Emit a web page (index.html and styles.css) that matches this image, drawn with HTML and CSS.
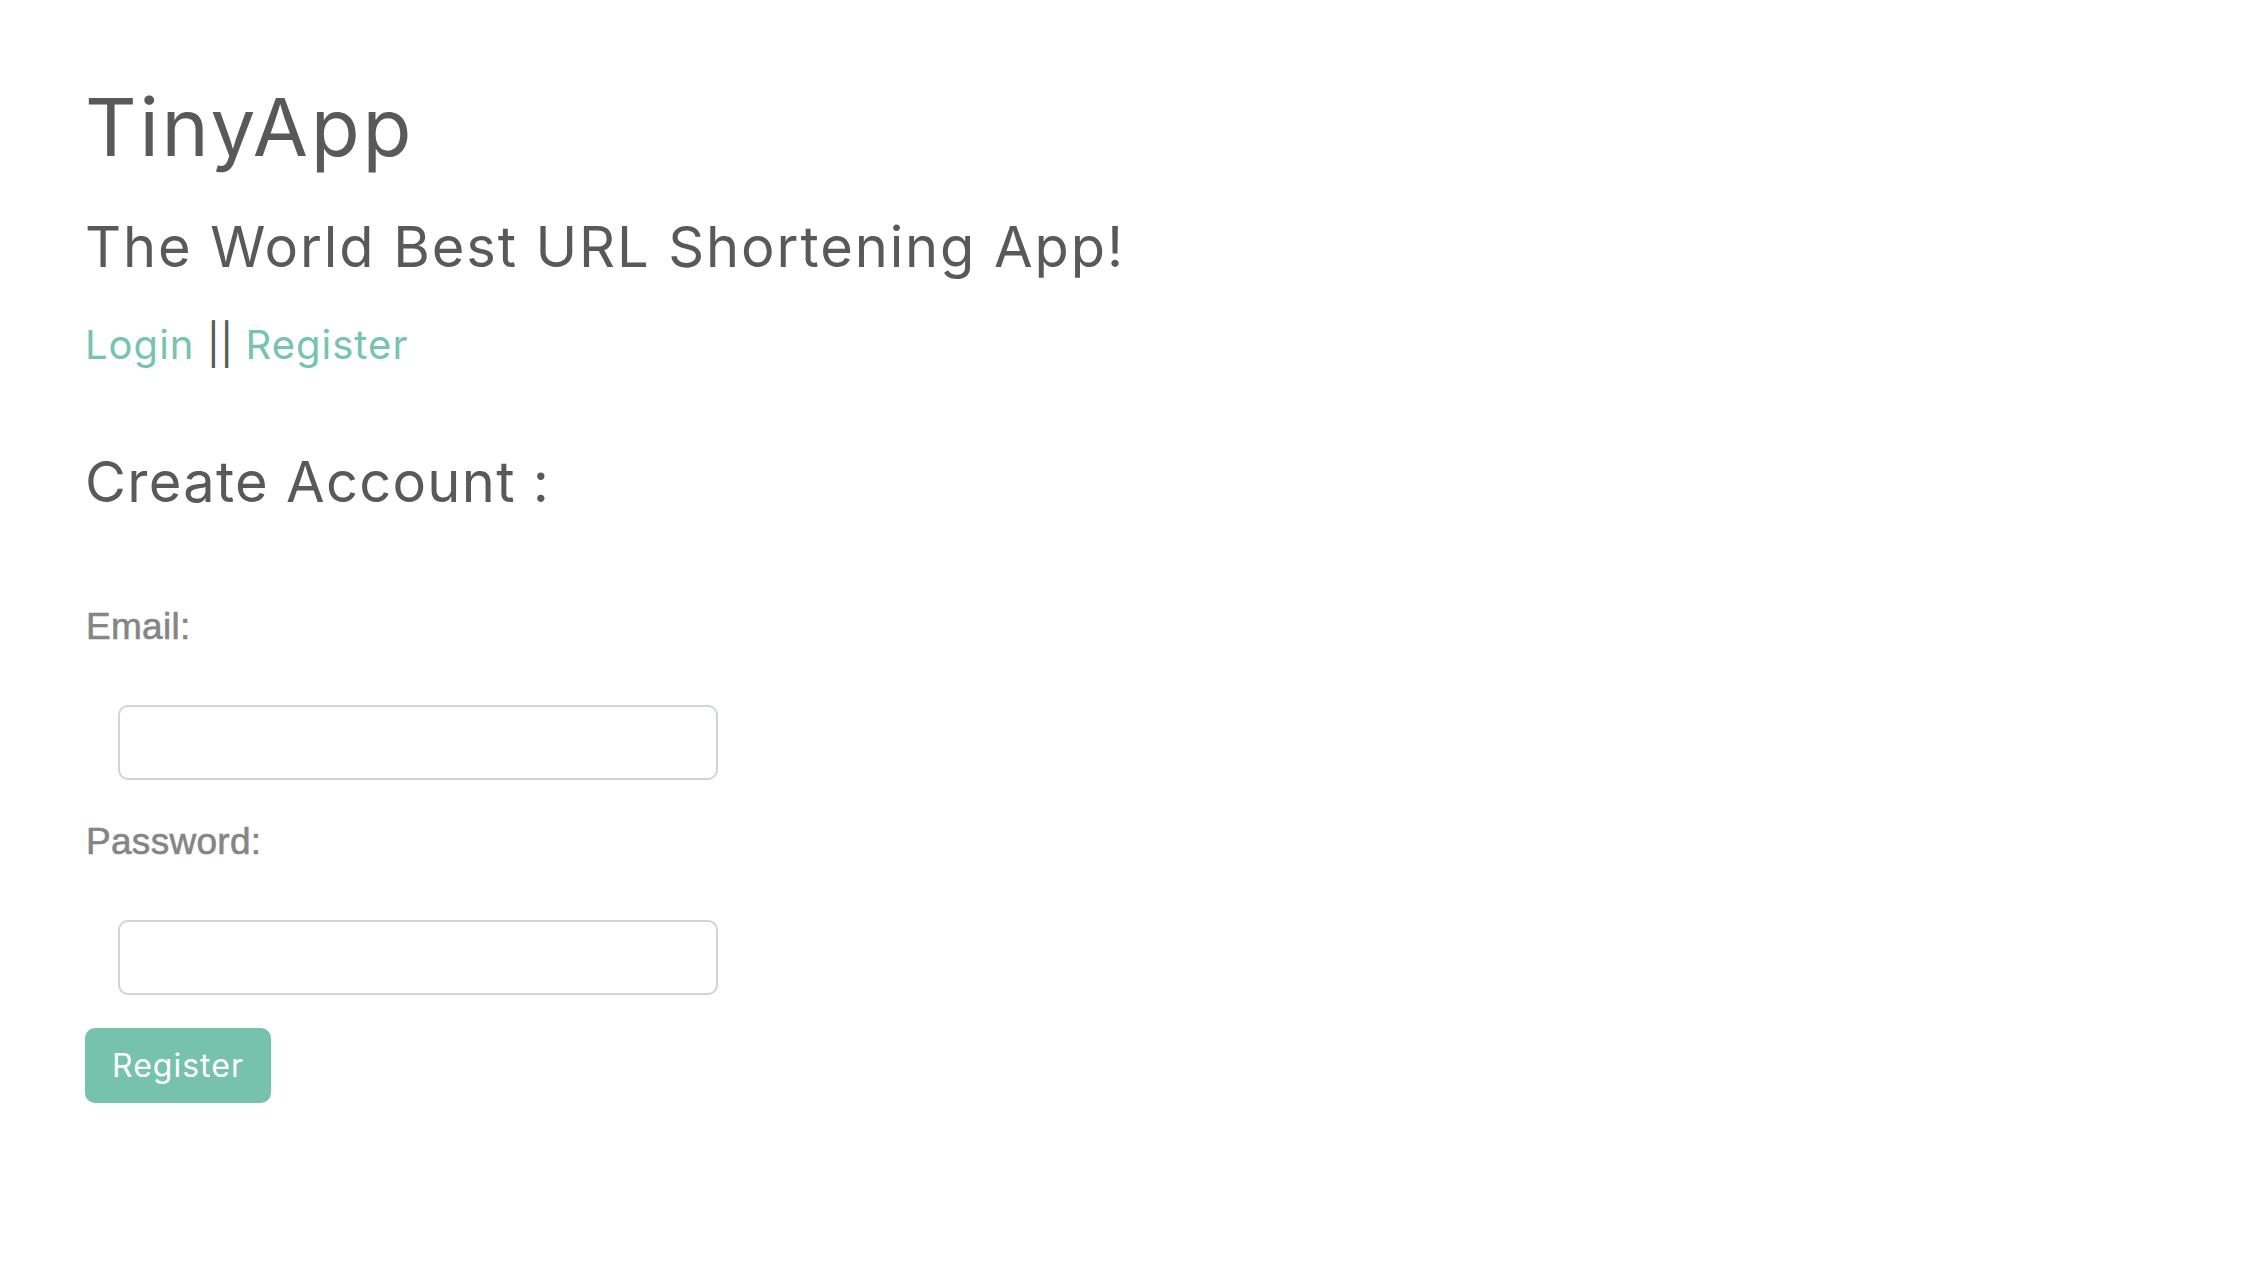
FILE: index.html
```html
<!DOCTYPE html>
<html lang="en">
<head>
<meta charset="utf-8">
<title>TinyApp</title>
<link rel="stylesheet" href="styles.css">
</head>
<body>
<div class="page">
  <header class="header">
    <h1 class="brand">TinyApp</h1>
    <h3 class="tagline">The World Best URL Shortening App!</h3>
    <nav class="nav"><a href="#" class="nav-link">Login</a> <span class="sep">||</span> <a href="#" class="nav-link">Register</a></nav>
  </header>
  <main class="main">
    <h3 class="section-title">Create Account :</h3>
    <form class="form">
      <label class="label" for="email">Email:</label>
      <input class="input" id="email" type="text">
      <label class="label label-pw" for="password">Password:</label>
      <input class="input" id="password" type="password">
      <button class="btn" type="button">Register</button>
    </form>
  </main>
</div>
</body>
</html>
```
FILE: styles.css
```css
html, body {
  margin: 0;
  padding: 0;
  background: #ffffff;
}
.page {
  padding: 79px 0 0 85px;
  font-family: Inter, "Noto Sans", sans-serif;
  color: #595959;
}
.header {
  display: flex;
  flex-direction: column;
  align-items: flex-start;
}
.brand {
  margin: 0;
  font-size: 80px;
  line-height: 96px;
  font-weight: 400;
  letter-spacing: 2.8px;
}
.tagline {
  margin: 39px 0 0;
  font-size: 56px;
  line-height: 67px;
  font-weight: 400;
  letter-spacing: 1.9px;
}
.nav {
  margin-top: 40px;
  font-size: 40px;
  line-height: 48px;
  letter-spacing: 1px;
}
.sep {
  letter-spacing: 0;
}
.nav-link {
  color: #76c3ae;
  text-decoration: none;
}
.main {
  margin-top: 80px;
}
.section-title {
  margin: 0;
  font-size: 56px;
  line-height: 67px;
  font-weight: 400;
  letter-spacing: 1.3px;
}
.form {
  display: flex;
  flex-direction: column;
  align-items: flex-start;
  margin-top: 89px;
}
.label {
  font-family: "Liberation Sans", Arial, sans-serif;
  font-size: 37px;
  line-height: 44px;
  color: #858585;
  margin-left: 1px;
  letter-spacing: 0.3px;
  -webkit-text-stroke: 0.6px #858585;
}
.label-pw {
  margin-top: 40px;
}
.input {
  box-sizing: border-box;
  margin: 56px 0 0 33px;
  width: 600px;
  height: 75px;
  border: 2px solid #ced4da;
  border-radius: 10px;
  background: #fff;
  outline: none;
  padding: 0 24px;
  font-size: 32px;
}
.btn {
  margin-top: 33px;
  box-sizing: border-box;
  width: 186px;
  height: 75px;
  border: none;
  border-radius: 10px;
  background: #76c2ad;
  color: #ffffff;
  font-family: Inter, "Noto Sans", sans-serif;
  font-size: 32px;
  letter-spacing: 1px;
  padding: 0;
}
```
